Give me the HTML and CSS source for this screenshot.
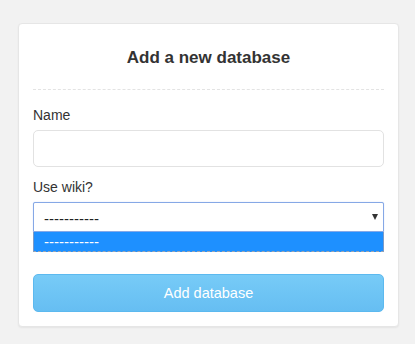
FILE: index.html
```html
<!DOCTYPE html>
<html>
<head>
<meta charset="utf-8">
<link rel="stylesheet" href="styles.css">
</head>
<body>
<div class="card">
  <h2 class="title">Add a new database</h2>
  <label class="label label-first">Name</label>
  <div class="input"></div>
  <label class="label">Use wiki?</label>
  <div class="select">
    <span class="select-text">-----------</span>
    <span class="arrow"></span>
  </div>
  <div class="dropdown"><span class="option">-----------</span></div>
  <div class="button">Add database</div>
</div>
</body>
</html>
```
FILE: styles.css
```css
html, body {
  margin: 0;
  padding: 0;
}
body {
  background: #f2f2f2;
  font-family: "Liberation Sans", Arial, sans-serif;
  color: #333;
  height: 344px;
  overflow: hidden;
}
.card {
  box-sizing: border-box;
  margin: 23px 0 0 18px;
  width: 381px;
  background: #fff;
  border: 1px solid #e6e6e6;
  border-radius: 4px;
  box-shadow: 0 1px 2px rgba(0,0,0,0.06);
  padding: 0 14px 14px;
  display: flex;
  flex-direction: column;
}
.title {
  margin: 0;
  padding: 24px 0 21px;
  font-size: 17px;
  line-height: 20px;
  font-weight: bold;
  text-align: center;
  color: #333;
  border-bottom: 1px dashed #e3e3e3;
}
.label {
  display: block;
  font-size: 14px;
  line-height: 20px;
  color: #333;
  margin: 10px 0 5px;
}
.label-first {
  margin-top: 15px;
}
.input {
  box-sizing: border-box;
  height: 37px;
  border: 1px solid #e2e2e2;
  border-radius: 5px;
  background: #fff;
}
.select {
  box-sizing: border-box;
  height: 30px;
  border: 1px solid #86a8e6;
  border-radius: 2px 2px 0 0;
  box-shadow: 0 0 1px #aac4f0;
  display: flex;
  align-items: center;
  justify-content: space-between;
  padding: 0 5px 0 10px;
  background: #fff;
}
.select-text {
  font-size: 15px;
  color: #222;
  position: relative;
  top: 1px;
}
.arrow {
  width: 0;
  height: 0;
  border-left: 3px solid transparent;
  border-right: 3px solid transparent;
  border-top: 6px solid #333;
}
.dropdown {
  box-sizing: border-box;
  height: 20px;
  background: #1e90ff;
  border-left: 1px solid #7a9ac8;
  border-right: 1px solid #7a9ac8;
  border-bottom: 1px dashed #9aa4b2;
  padding-left: 10px;
  display: flex;
  align-items: center;
}
.option {
  font-size: 15px;
  color: #fff;
  line-height: 15px;
}
.button {
  box-sizing: border-box;
  margin-top: 22px;
  height: 38px;
  border: 1px solid #5cb9ef;
  border-radius: 5px;
  background: linear-gradient(#77cbf7, #66bef2);
  color: #fff;
  font-size: 14.5px;
  display: flex;
  align-items: center;
  justify-content: center;
}
```
